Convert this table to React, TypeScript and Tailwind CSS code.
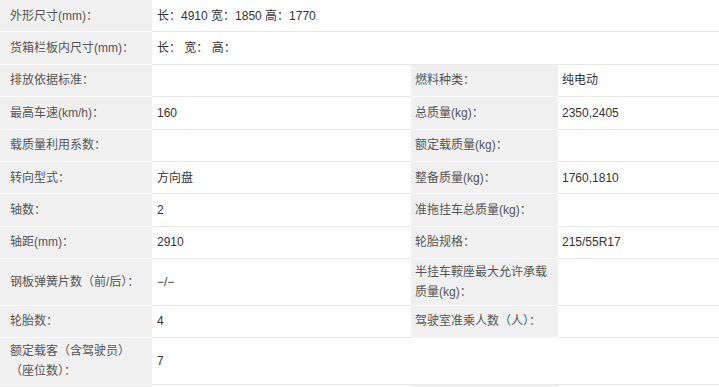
type Cell = { label: string; value?: string };
type Row = { left: Cell; right?: Cell; tall?: boolean };

const rows: Row[] = [
  { left: { label: "外形尺寸(mm)：", value: "长：4910 宽：1850 高：1770" } },
  { left: { label: "货箱栏板内尺寸(mm)：", value: "长： 宽： 高：" } },
  { left: { label: "排放依据标准：" }, right: { label: "燃料种类：", value: "纯电动" } },
  { left: { label: "最高车速(km/h)：", value: "160" }, right: { label: "总质量(kg)：", value: "2350,2405" } },
  { left: { label: "载质量利用系数：" }, right: { label: "额定载质量(kg)：" } },
  { left: { label: "转向型式：", value: "方向盘" }, right: { label: "整备质量(kg)：", value: "1760,1810" } },
  { left: { label: "轴数：", value: "2" }, right: { label: "准拖挂车总质量(kg)：" } },
  { left: { label: "轴距(mm)：", value: "2910" }, right: { label: "轮胎规格：", value: "215/55R17" } },
  {
    left: { label: "钢板弹簧片数（前/后）：", value: "−/−" },
    right: { label: "半挂车鞍座最大允许承载质量(kg)：" },
    tall: true,
  },
  { left: { label: "轮胎数：", value: "4" }, right: { label: "驾驶室准乘人数（人）：" } },
  { left: { label: "额定载客（含驾驶员）（座位数）：", value: "7" }, tall: true },
  { left: { label: "" }, right: { label: "" } },
];

const base = "flex min-h-[32.4px] items-center border-b leading-[20px]";
const labelCls = `${base} border-[#f8f8f8] bg-[#f0f0f0] text-[#555555]`;
const valueCls = `${base} border-[#e8e8e8] bg-white text-[#333333]`;

export default function App() {
  return (
    <div
      className="w-[719px] bg-white text-[12px]"
      style={{ fontFamily: '"Liberation Sans", "Noto Sans CJK SC", sans-serif' }}
    >
      <div className="grid grid-cols-[152px_259px_147px_161px]">
        {rows.map((r, i) => {
          const pad = r.tall ? "pt-[3px] pb-[2.5px]" : "";
          return (
            <div key={i} className="contents">
              <div className={`${labelCls} ${pad} pl-[10px] pr-[6px]`}>{r.left.label}</div>
              {r.right ? (
                <>
                  <div className={`${valueCls} ${pad} px-[5px]`}>{r.left.value}</div>
                  <div className={`${labelCls} ${pad} px-[4px]`}>{r.right.label}</div>
                  <div className={`${valueCls} ${pad} px-[4px]`}>{r.right.value}</div>
                </>
              ) : (
                <div className={`${valueCls} ${pad} col-span-3 px-[5px] whitespace-pre`}>
                  {r.left.value}
                </div>
              )}
            </div>
          );
        })}
      </div>
    </div>
  );
}
